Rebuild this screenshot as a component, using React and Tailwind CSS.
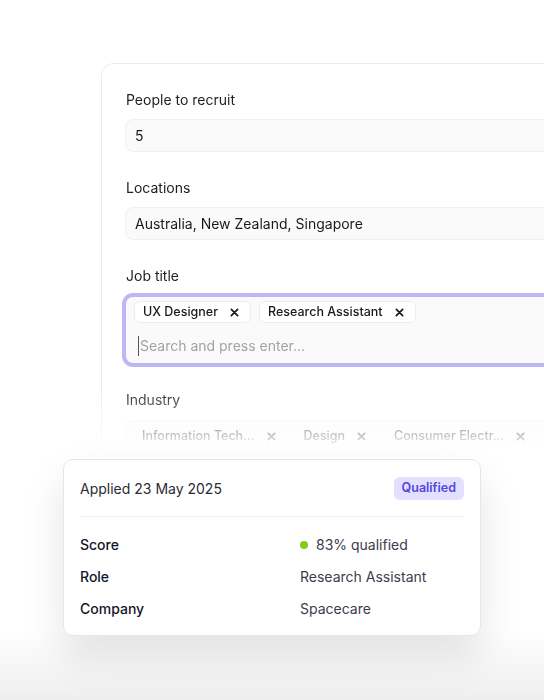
import React from 'react';

const XIcon = ({ className }) => (
  <svg viewBox="0 0 10 10" className={className} fill="none" stroke="currentColor" strokeWidth="1.9" strokeLinecap="round">
    <path d="M1.5 1.5l7 7M8.5 1.5l-7 7" />
  </svg>
);

const Chip = ({ label, muted }) => (
  <span
    className={`inline-flex items-center h-[22px] pl-2 pr-[11px] rounded-md text-[12.5px] font-medium ${
      muted ? 'text-gray-900' : 'bg-white border border-[#ececec] text-[#1a1a1a]'
    }`}
  >
    {label}
    <XIcon className="w-[9px] h-[9px] ml-3" />
  </span>
);

const Field = ({ label, children, className = '' }) => (
  <div className={className}>
    <div className="text-[14px] leading-5 text-[#1f1f1f]">{label}</div>
    {children}
  </div>
);

const Row = ({ label, children }) => (
  <div className="grid grid-cols-[220px_1fr] items-center leading-5 text-[14px]">
    <span className="font-medium text-[#14142b]">{label}</span>
    <span className="text-[#3c3c4c] flex items-center">{children}</span>
  </div>
);

export default function App() {
  return (
    <div
      className="relative w-[544px] h-[700px] overflow-hidden bg-[linear-gradient(to_bottom,#ffffff_0%,#ffffff_90%,#eeeeee_100%)]"
      style={{ fontFamily: 'Inter, "Noto Sans", sans-serif' }}
    >
      <div className="pl-[101px] pt-[63px]">
        <div className="w-[480px] h-[400px] rounded-xl border border-[#ebebeb] bg-white pt-[26px] px-[24px] [mask-image:linear-gradient(to_bottom,black_325px,transparent_388px)]">
          <Field label="People to recruit">
            <div className="mt-[9px] -ml-px h-[33px] rounded-lg border border-[#f0f0f0] bg-[#fafafa] pl-[9px] flex items-center text-[14px] text-[#1a1a1a]">
              5
            </div>
          </Field>

          <Field label="Locations" className="mt-[26px]">
            <div className="mt-[9px] -ml-px h-[33px] rounded-lg border border-[#f0f0f0] bg-[#fafafa] pl-[9px] flex items-center text-[14px] text-[#1a1a1a]">
              Australia, New Zealand, Singapore
            </div>
          </Field>

          <Field label="Job title" className="mt-[26px]">
            <div className="mt-[10px] -ml-px h-[68px] rounded-lg border border-[#b9b5f6] ring-[3px] ring-[#bcb8f8] bg-[#fafafa] pt-[4px] px-2">
              <div className="flex gap-2">
                <Chip label="UX Designer" />
                <Chip label="Research Assistant" />
              </div>
              <div className="mt-[13px] pl-1 flex items-center text-[14px] leading-5 text-[#a3a3a3]">
                <span className="w-px h-5 bg-[#555] mr-px" />
                Search and press enter...
              </div>
            </div>
          </Field>

          <Field label="Industry" className="mt-[26px]">
            <div className="mt-[10px] -ml-px h-[33px] rounded-lg border border-[#f0f0f0] bg-[#fafafa] px-2 flex items-center gap-[9px]">
              <Chip label="Information Tech..." muted />
              <Chip label="Design" muted />
              <Chip label="Consumer Electr..." muted />
            </div>
          </Field>
        </div>
      </div>

      <div className="absolute left-[63px] top-[459px] w-[418px] h-[177px] rounded-[10px] border border-[#e6e6e6] bg-white px-4 pt-4 shadow-[0_20px_40px_rgba(0,0,0,0.11)]">
        <div className="flex items-center justify-between h-[24px]">
          <span className="text-[14px] text-[#2b2b33]">Applied 23 May 2025</span>
          <span className="h-[23px] px-2 rounded-md bg-[#e2e0fe] text-[#5346de] text-[12.5px] font-semibold flex items-center">
            Qualified
          </span>
        </div>
        <div className="mt-[16px] h-px bg-[#ececec]" />
        <div className="mt-[18px] flex flex-col gap-3">
          <Row label="Score">
            <span className="w-2 h-2 rounded-full bg-[#84cc16] mr-2" />
            83% qualified
          </Row>
          <Row label="Role">Research Assistant</Row>
          <Row label="Company">Spacecare</Row>
        </div>
      </div>
    </div>
  );
}
